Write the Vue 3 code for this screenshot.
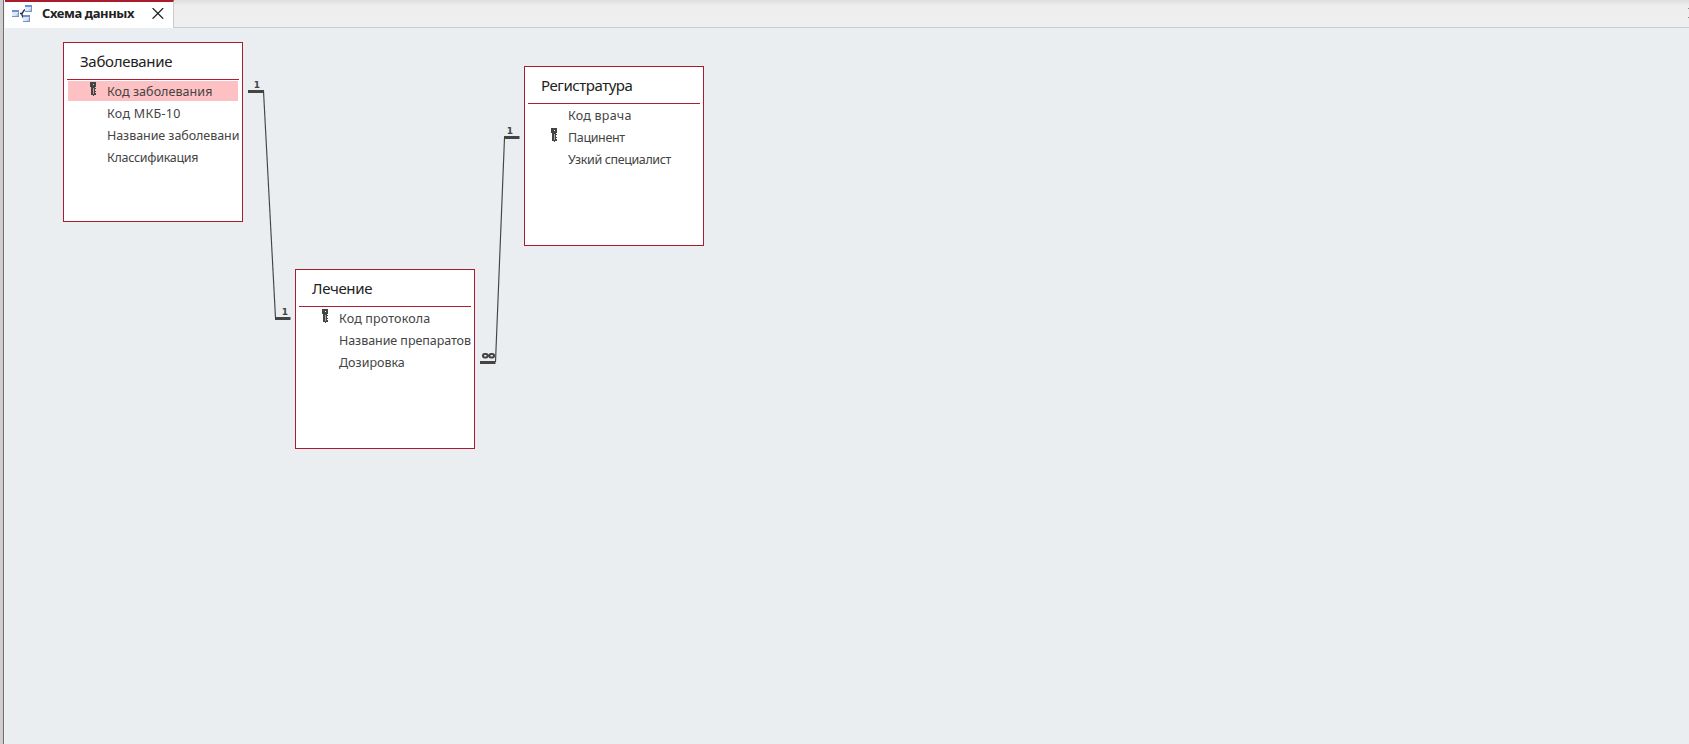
<script setup>
const tables = [
  { id: 'a', title: 'Заболевание', track: -0.3, fields: [
    { t: 'Код заболевания', track: 0.06, key: true, sel: true }, { t: 'Код МКБ-10', track: 0.27 },
    { t: 'Название заболевани', track: -0.06 }, { t: 'Классификация', track: -0.29 }] },
  { id: 'b', title: 'Лечение', track: -0.33, fields: [
    { t: 'Код протокола', track: 0.15, key: true }, { t: 'Название препаратов', track: -0.06 }, { t: 'Дозировка', track: 0 }] },
  { id: 'c', title: 'Регистратура', track: -0.45, fields: [
    { t: 'Код врача', track: 0.22 }, { t: 'Пацинент', track: -0.36, key: true }, { t: 'Узкий специалист', track: -0.38 }] },
]
</script>

<template>
  <div class="window">
    <div class="rail"></div>
    <div class="main">
      <header class="tabs">
        <div class="tab">
          <svg class="logo" width="20" height="18" viewBox="0 0 20 18">
            <path d="M8 8.5H10L12.8 4.3M10 8.5V10L11.5 13H12" fill="none" stroke="#24304a" stroke-width="1.4" />
            <g v-for="c in [[0, 5], [13, 0], [11, 10]]" :key="c[0]" :transform="`translate(${c[0]} ${c[1]})`">
              <rect width="7" height="7" fill="#dfe8f8" />
              <path d="M7 2V7H2Z" fill="#b3c8ee" />
              <rect width="7" height="2" fill="#6a92dc" />
              <path d="M0 6.5H7M6.5 2V7" fill="none" stroke="#7f94bb" />
            </g>
          </svg>
          <span class="name">Схема данных</span>
          <svg class="close" width="12" height="11" viewBox="0 0 12 11"><path d="M.6 .1L11.2 10.7M11.2 .1L.6 10.7" stroke="#222" stroke-width="1.3" /></svg>
        </div>
        <div class="strip"><i></i><i></i></div>
      </header>
      <div class="canvas"></div>
    </div>

    <svg class="links" width="1689" height="744" viewBox="0 0 1689 744">
      <g stroke="#444" stroke-width="1.15" fill="none">
        <path d="M263.5 91L275.5 318" />
        <path d="M504.5 138L495.5 362" />
      </g>
      <g fill="#444">
        <rect x="248" y="90" width="16" height="3" />
        <rect x="275" y="317" width="15.5" height="3" />
        <rect x="504" y="136" width="15.5" height="3" />
        <rect x="480" y="361" width="15.5" height="3" />
      </g>
      <g class="one">
        <text x="253.8" y="87.5">1</text><text x="281.8" y="314.5">1</text><text x="506.8" y="133.5">1</text>
      </g>
      <g fill="none" stroke="#444" stroke-width="2">
        <rect x="483" y="354" width="4.6" height="3.4" rx="1.6" /><rect x="489.4" y="354" width="4.6" height="3.4" rx="1.6" />
        <path d="M487 355.7H490" />
      </g>
    </svg>

    <section v-for="t in tables" :key="t.id" class="table" :class="t.id">
      <h2 :style="{ letterSpacing: t.track + 'px' }">{{ t.title }}</h2>
      <ul>
        <li v-for="f in t.fields" :key="f.t" :class="{ sel: f.sel }">
          <svg v-if="f.key" class="key" width="6" height="14" viewBox="0 0 6 14" shape-rendering="crispEdges">
            <path d="M0 0H6V5H5V6H6V7H5V9H6V10H5V11H6V13H4V14H3V13H1V5H0ZM3 2V3H4V2Z" fill="#444" fill-rule="evenodd" />
            <path d="M3 6H4V12H3Z" fill="#b5a5a6" />
          </svg>
          <span :style="{ letterSpacing: f.track + 'px' }">{{ f.t }}</span>
        </li>
      </ul>
    </section>
  </div>
</template>

<style>
body { overflow: hidden; }
</style>
<style scoped>
.window { position: relative; display: flex; width: 1689px; height: 744px; background: #eaeef1; font-family: "Noto Sans", "Open Sans", sans-serif; overflow: hidden; }
.rail { flex: none; width: 3px; background: #d0cfce; border-right: 1px solid #6c6c6c; }
.main { flex: 1; display: flex; flex-direction: column; border-left: 1px solid #f2f4f5; }
.tabs { display: flex; height: 28px; }
.tab { box-sizing: border-box; display: flex; align-items: center; width: 169px; border-top: 2px solid #a81c2c; border-right: 1px solid #c9cbcc; background: #fff; padding: 0 0 4px 7px; }
.logo { flex: none; margin-top: 2px; }
.name { margin-left: 10px; width: 93px; font-size: 13px; font-weight: 700; color: #222; white-space: nowrap; letter-spacing: -0.4px; }
.close { margin-left: 17px; }
.strip { flex: 1; box-sizing: border-box; display: flex; flex-direction: column; align-items: flex-end; gap: 8px; padding-top: 8px; border-bottom: 1px solid #c9cbcc; background: linear-gradient(#dedede, #eee 6px, #efefef); }
.strip i { width: 1px; height: 1px; background: #888; }
.canvas { flex: 1; background: #eaeef1; }
.links { position: absolute; left: 0; top: 0; }
.one text { font: bold 9px "DejaVu Sans", sans-serif; fill: #444; }
.table { position: absolute; box-sizing: border-box; width: 180px; height: 180px; border: 1px solid #a81c32; background: #fff; }
.a { left: 63px; top: 42px; }
.b { left: 295px; top: 269px; }
.c { left: 524px; top: 66px; }
h2 { box-sizing: border-box; margin: 0 3px; height: 37px; padding-left: 13px; border-bottom: 1px solid #b01e34; font-size: 15px; font-weight: 400; line-height: 37px; color: #222; }
ul { list-style: none; margin: 1px 3px 0 4px; padding: 0; display: grid; grid-template-columns: minmax(0, 1fr); gap: 2px; }
li { display: flex; height: 20px; align-items: center; padding-left: 39px; position: relative; font-size: 12.5px; color: #444; white-space: nowrap; }
li.sel { background: #fec1c3; margin-right: 1px; }
.key { position: absolute; left: 22px; top: 1px; }
</style>
